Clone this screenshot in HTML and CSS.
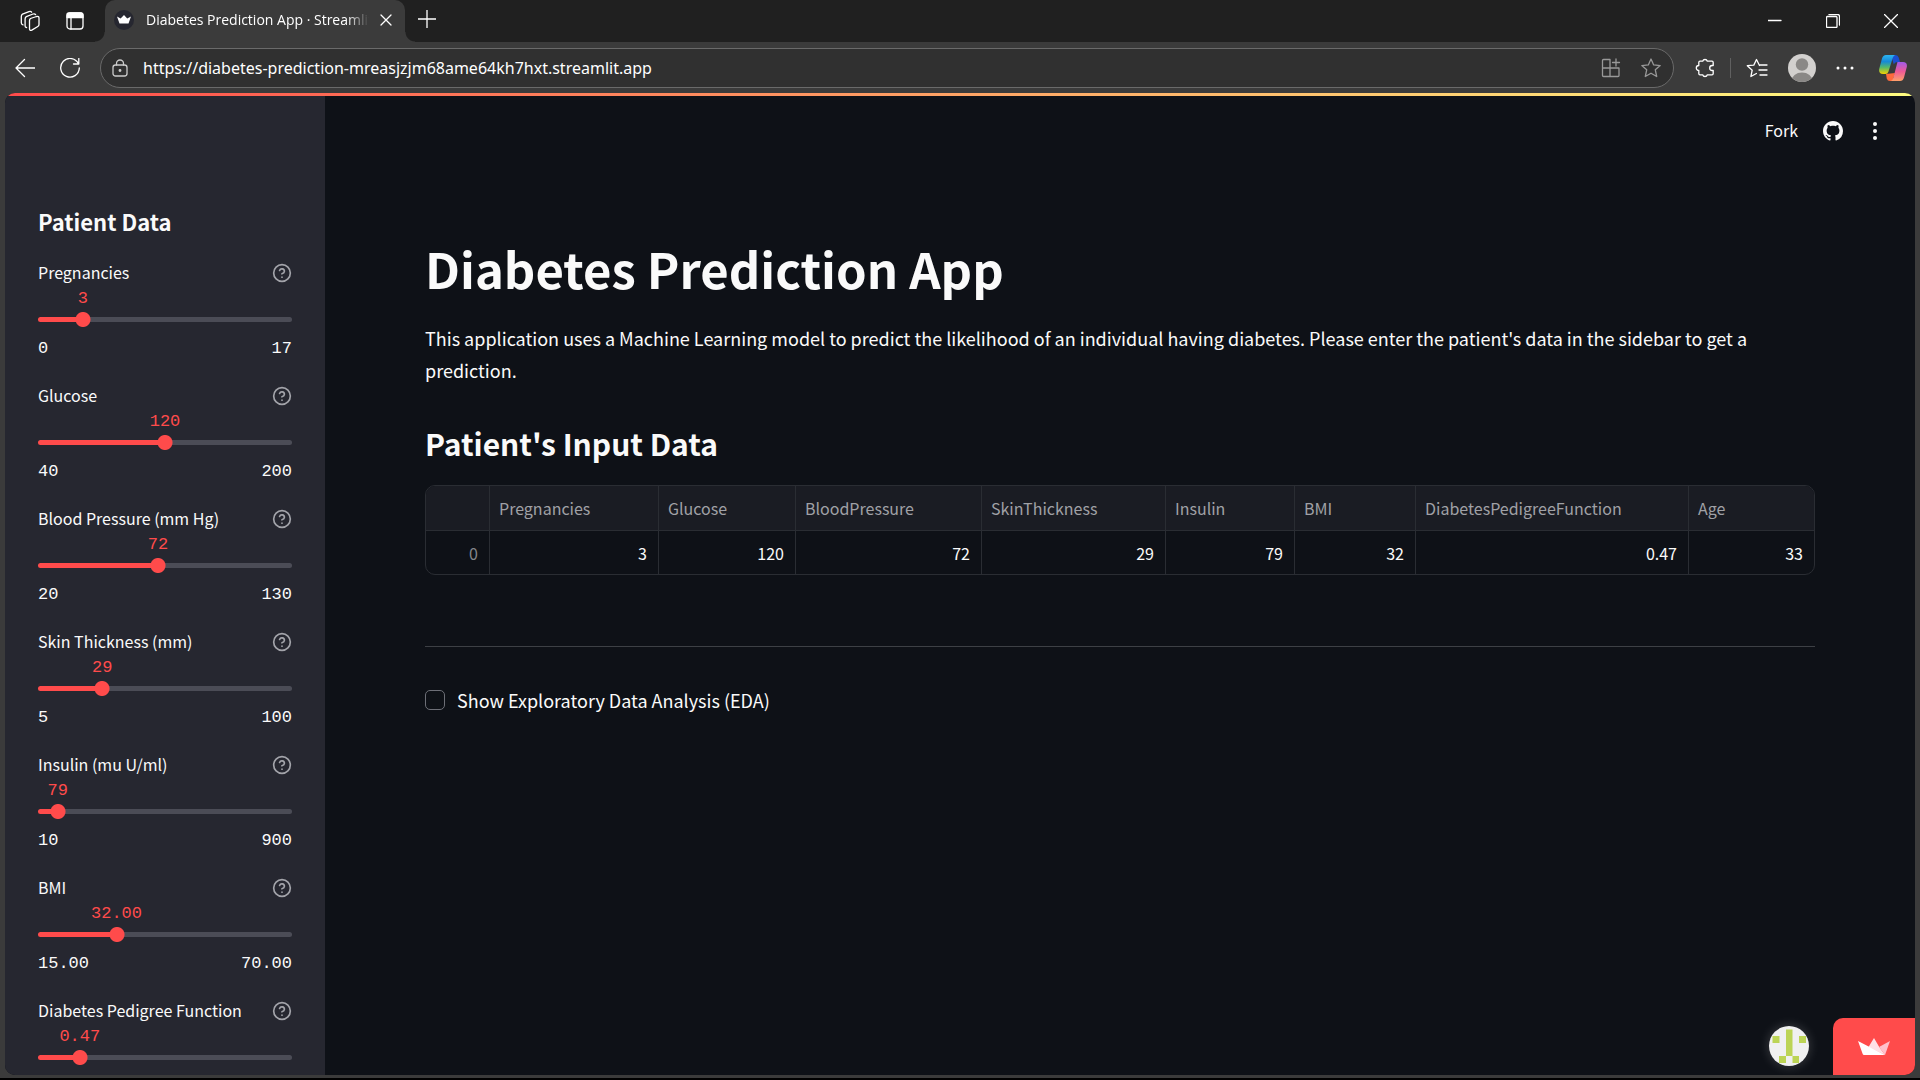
FILE: index.html
```html
<!DOCTYPE html>
<html lang="en">
<head>
<meta charset="utf-8">
<title>Diabetes Prediction App · Streamlit</title>
<link rel="stylesheet" href="styles.css">
</head>
<body>
<svg class="defs" aria-hidden="true">
  <symbol id="help" viewBox="0 0 24 24"><circle cx="12" cy="12" r="10"/><path d="M9.1 9a3 3 0 0 1 5.8 1c0 2-3 3-3 3M12 17h.01"/></symbol>
</svg>

<header class="browser">
  <div class="tabstrip">
    <div class="strip-tools">
      <button class="icon-btn" aria-label="Workspaces"><svg width="24" height="24" viewBox="0 0 24 24" class="line"><path d="M12.500 9.500l6-2q2.500-.6 2.500 1.500v6.500q0 1.400-1.200 2l-6 3.600q-2.300 1-2.300-1.300v-8q0-1.700 1-2.300z"/><path d="M8.600 18.500q-1.500-.2-1.500-1.600V10q0-1.700 1.200-2.400L15 5q1.800-.6 2.600.6M5 15.800Q3.300 15.400 3.300 13.800V7.500q0-1.700 1.200-2.400L11 2.600q1.800-.6 2.600.6"/></svg></button>
      <button class="icon-btn" aria-label="Tab actions"><svg width="20" height="20" viewBox="0 0 20 20" class="line"><rect x="2" y="2" width="16" height="16" rx="3"/><path d="M2 3.500Q2 2 4 2h12q2 0 2 2v2.500H2z" fill="#fff"/><path d="M6 7v11"/></svg></button>
    </div>
    <div class="tab">
      <svg width="20" height="20" viewBox="0 0 20 20"><circle cx="10" cy="10" r="10" fill="#262730"/><path d="M3 6.500l3.600 2L10 5l3.200 3.500L17 6.500 14.500 13.500h-9z" fill="#fff"/></svg>
      <span class="tab-title">Diabetes Prediction App · Streamlit</span>
      <button class="icon-btn" aria-label="Close tab"><svg width="12" height="12" viewBox="0 0 12 12" class="line"><path d="M1 1l10 10M11 1L1 11"/></svg></button>
    </div>
    <button class="icon-btn new-tab" aria-label="New tab"><svg width="18" height="18" viewBox="0 0 18 18" class="line"><path d="M9 0v18M0 9h18"/></svg></button>
    <div class="window-controls">
      <button class="icon-btn" aria-label="Minimize"><svg width="14" height="14" viewBox="0 0 14 14" class="line"><path d="M0 6.500h13"/></svg></button>
      <button class="icon-btn" aria-label="Restore"><svg width="14" height="14" viewBox="0 0 14 14" class="line"><rect x=".5" y="2.500" width="10.500" height="11" rx="1"/><path d="M3 .5h8.500q2 0 2 2V11"/></svg></button>
      <button class="icon-btn" aria-label="Close"><svg width="14" height="14" viewBox="0 0 14 14" class="line"><path d="M.5.5l13 13M13.500.5l-13 13"/></svg></button>
    </div>
  </div>
  <div class="toolbar">
    <button class="icon-btn" aria-label="Back"><svg width="20" height="20" viewBox="0 0 20 20" class="line"><path d="M20 10H1M9.500 1.500L1 10l8.500 8.500"/></svg></button>
    <button class="icon-btn" aria-label="Refresh"><svg width="20" height="20" viewBox="0 0 20 20" class="line"><path d="M18.500 6A9.300 9.300 0 1 0 19.300 10M18.800.5V6H13.500"/></svg></button>
    <div class="address">
      <svg width="16" height="18" viewBox="0 0 16 18" class="line soft"><rect x="1" y="6" width="14" height="11" rx="2.500"/><path d="M4.500 6V4.500a3.500 3.500 0 0 1 7 0V6"/><circle cx="8" cy="11.500" r=".8" fill="#fff"/></svg>
      <input class="url" type="text" aria-label="Address" value="https://diabetes-prediction-mreasjzjm68ame64kh7hxt.streamlit.app">
      <button class="icon-btn" aria-label="Install app"><svg width="20" height="20" viewBox="0 0 20 20" class="line dim"><path d="M1.500 2.500q0-1 1-1h6.500v17H2.500q-1 0-1-1zM1.500 10h16.500v7.500q0 1-1 1H9M15 1v7M11.500 4.500h7"/></svg></button>
      <button class="icon-btn" aria-label="Add to favorites"><svg width="20" height="20" viewBox="0 0 20 20" class="line dim"><path d="M10 1l2.700 5.900 6.500.7-4.900 4.200 1.400 6.700L10 15.200l-5.700 3.300 1.400-6.700L.8 7.600l6.500-.7z"/></svg></button>
    </div>
    <div class="toolbar-end">
      <button class="icon-btn" aria-label="Extensions"><svg width="20" height="20" viewBox="0 0 20 20" class="line"><path d="M5 3.200h2.700a2.400 2.400 0 0 1 4.600 0H17q1.200 0 1.200 1.200V7.500h-1a2.500 2.500 0 0 0 0 5h1V15.600q0 1.200-1.200 1.200H12.300a2.400 2.400 0 0 1-4.600 0H5q-1.200 0-1.200-1.200V12.500a2.500 2.500 0 0 1 0-5V4.400q0-1.200 1.200-1.200z"/></svg></button>
      <span class="divider"></span>
      <button class="icon-btn" aria-label="Favorites"><svg width="22" height="20" viewBox="0 0 22 20" class="line"><path d="M13.500 7.500L10.500 1.500 7.800 7.100 1.300 7.700l4.900 4.500-1.300 6.300 5.500-3M14 7h7M13 12h8M14 17h7"/></svg></button>
      <button class="icon-btn profile" aria-label="Profile"><svg width="28" height="28" viewBox="0 0 28 28"><clipPath id="pf"><circle cx="14" cy="14" r="14"/></clipPath><g clip-path="url(#pf)"><path d="M0 0h28v28H0z" fill="#d2d0ce"/><circle cx="14" cy="10.500" r="6.200" fill="#8a8886"/><ellipse cx="14" cy="27" rx="10.500" ry="8.500" fill="#8a8886"/></g></svg></button>
      <button class="icon-btn" aria-label="Settings"><svg width="18" height="4" viewBox="0 0 18 4" fill="#fff"><circle cx="2" cy="2" r="1.500"/><circle cx="9" cy="2" r="1.500"/><circle cx="16" cy="2" r="1.500"/></svg></button>
      <button class="icon-btn copilot" aria-label="Copilot"><svg width="28" height="26" viewBox="0 0 28 26">
        <defs>
          <linearGradient id="ca" x1="0" y1="0" x2="0" y2="1"><stop offset="0" stop-color="#2db4f0"/><stop offset=".35" stop-color="#1689d8"/><stop offset=".65" stop-color="#55b96b"/><stop offset="1" stop-color="#f5d000"/></linearGradient>
          <linearGradient id="cb" x1="0" y1="0" x2="0" y2="1"><stop offset="0" stop-color="#a05ae8"/><stop offset=".5" stop-color="#ee5a96"/><stop offset="1" stop-color="#ffa06a"/></linearGradient>
        </defs>
        <path d="M12 0h4.500q2.500 0 3.200 2.500L21 7h-3q-2.500 0-3.200 2.500z" fill="#1b4fd0"/>
        <path d="M7 19l9-1-2.500 8H11q-2.500 0-3.200-2.500z" fill="#ff6a3c"/>
        <path d="M7 0h9q-1.600.8-2.300 3L9.500 16.500Q8.700 19 6.500 19H4Q-.6 19 .2 14L3 3.500Q4 0 7 0z" fill="url(#ca)"/>
        <path d="M18.500 7H24q4.600 0 3.800 5L25 22.500Q24 26 21 26h-9q1.600-.8 2.300-3z" fill="url(#cb)"/></svg></button>
    </div>
  </div>
</header>

<div class="viewport">
  <aside class="sidebar">
    <h2>Patient Data</h2>
    <div class="widget" style="--pct: 17.65%">
      <div class="label-row"><label for="s1">Pregnancies</label><svg class="help"><use href="#help"/></svg></div>
      <output for="s1">3</output>
      <div class="slider"><input id="s1" type="range" min="0" max="17" value="3"></div>
      <div class="limits"><span>0</span><span>17</span></div>
    </div>
    <div class="widget" style="--pct: 50%">
      <div class="label-row"><label for="s2">Glucose</label><svg class="help"><use href="#help"/></svg></div>
      <output for="s2">120</output>
      <div class="slider"><input id="s2" type="range" min="40" max="200" value="120"></div>
      <div class="limits"><span>40</span><span>200</span></div>
    </div>
    <div class="widget" style="--pct: 47.27%">
      <div class="label-row"><label for="s3">Blood Pressure (mm Hg)</label><svg class="help"><use href="#help"/></svg></div>
      <output for="s3">72</output>
      <div class="slider"><input id="s3" type="range" min="20" max="130" value="72"></div>
      <div class="limits"><span>20</span><span>130</span></div>
    </div>
    <div class="widget" style="--pct: 25.26%">
      <div class="label-row"><label for="s4">Skin Thickness (mm)</label><svg class="help"><use href="#help"/></svg></div>
      <output for="s4">29</output>
      <div class="slider"><input id="s4" type="range" min="5" max="100" value="29"></div>
      <div class="limits"><span>5</span><span>100</span></div>
    </div>
    <div class="widget" style="--pct: 7.75%">
      <div class="label-row"><label for="s5">Insulin (mu U/ml)</label><svg class="help"><use href="#help"/></svg></div>
      <output for="s5">79</output>
      <div class="slider"><input id="s5" type="range" min="10" max="900" value="79"></div>
      <div class="limits"><span>10</span><span>900</span></div>
    </div>
    <div class="widget" style="--pct: 30.91%">
      <div class="label-row"><label for="s6">BMI</label><svg class="help"><use href="#help"/></svg></div>
      <output for="s6">32.00</output>
      <div class="slider"><input id="s6" type="range" min="15" max="70" step="0.1" value="32"></div>
      <div class="limits"><span>15.00</span><span>70.00</span></div>
    </div>
    <div class="widget" style="--pct: 16.46%">
      <div class="label-row"><label for="s7">Diabetes Pedigree Function</label><svg class="help"><use href="#help"/></svg></div>
      <output for="s7">0.47</output>
      <div class="slider"><input id="s7" type="range" min="0.08" max="2.45" step="0.01" value="0.47"></div>
    </div>
  </aside>

  <main class="main">
    <nav class="app-bar">
      <button class="fork">Fork</button>
      <a href="#" aria-label="GitHub"><svg width="20" height="20" viewBox="0 0 16 16" fill="#fafafa"><path d="M8 0C3.580 0 0 3.580 0 8c0 3.540 2.290 6.530 5.470 7.590.4.070.55-.17.55-.38 0-.19-.01-.82-.01-1.490-2.010.37-2.530-.49-2.690-.94-.09-.23-.48-.94-.82-1.130-.28-.15-.68-.52-.01-.53.63-.01 1.080.58 1.230.82.72 1.210 1.870.87 2.330.66.07-.52.28-.87.51-1.070-1.780-.2-3.640-.89-3.640-3.950 0-.87.31-1.590.82-2.150-.08-.2-.36-1.020.08-2.120 0 0 .67-.21 2.200.82.64-.18 1.320-.27 2-.27s1.360.09 2 .27c1.530-1.040 2.200-.82 2.200-.82.44 1.100.16 1.920.08 2.120.51.56.82 1.270.82 2.150 0 3.070-1.870 3.750-3.650 3.950.29.25.54.73.54 1.480 0 1.070-.01 1.930-.01 2.200 0 .21.15.46.55.38A8.010 8.010 0 0 0 16 8c0-4.420-3.580-8-8-8z"/></svg></a>
      <button class="icon-btn" aria-label="Main menu"><svg width="4" height="18" viewBox="0 0 4 18" fill="#fafafa"><circle cx="2" cy="2" r="2"/><circle cx="2" cy="9" r="2"/><circle cx="2" cy="16" r="2"/></svg></button>
    </nav>
    <section class="content">
      <h1>Diabetes Prediction App</h1>
      <p>This application uses a Machine Learning model to predict the likelihood of an individual having diabetes. Please enter the patient's data in the sidebar to get a prediction.</p>
      <h2>Patient's Input Data</h2>
      <div class="frame">
        <table>
          <colgroup><col class="c-index"><col class="c-preg"><col class="c-gluc"><col class="c-bp"><col class="c-skin"><col class="c-ins"><col class="c-bmi"><col class="c-dpf"><col class="c-age"></colgroup>
          <thead><tr><td></td><th>Pregnancies</th><th>Glucose</th><th>BloodPressure</th><th>SkinThickness</th><th>Insulin</th><th>BMI</th><th>DiabetesPedigreeFunction</th><th>Age</th></tr></thead>
          <tbody><tr><th>0</th><td>3</td><td>120</td><td>72</td><td>29</td><td>79</td><td>32</td><td>0.47</td><td>33</td></tr></tbody>
        </table>
      </div>
      <hr>
      <label class="check"><input type="checkbox"><span>Show Exploratory Data Analysis (EDA)</span></label>
    </section>
    <div class="badges">
      <a class="avatar" href="#" aria-label="Creator profile"><svg width="40" height="40" viewBox="0 0 40 40"><circle cx="20" cy="20" r="20" fill="#f0f0f0"/><path d="M17 3.500h6.500v26.500H17zM3.500 10h7v7h-7zM30 10h7v7h-7zM10 30h7v7h-7zM23.500 30h6.500v7h-6.500z" fill="#bcd455"/></svg></a>
      <a class="hosted" href="#" aria-label="Hosted with Streamlit"><svg width="32" height="18" viewBox="0 0 32 18"><path d="M16 0l5.500 9.500L27 17 10.500 9z" fill="#ffe1e6"/><path d="M32 3l-5 14-6-8z" fill="#ffc0cb"/><path d="M0 3l27 14H6q-1 0-1.300-1z" fill="#fff"/></svg></a>
    </div>
  </main>
</div>
</body>
</html>
```
FILE: styles.css
```css
* { box-sizing: border-box; }

:root {
  --red: #ff4b4b;
  --text: #fafafa;
  --chrome: #3b3b3b;
  --line: #2a2d33;
  --sans: "Noto Sans CJK SC", "Noto Sans", sans-serif;
  --ui: "Open Sans", "Noto Sans", sans-serif;
  --mono: "Liberation Mono", monospace;
}

body {
  margin: 0;
  height: 100vh;
  display: flex;
  flex-direction: column;
  overflow: hidden;
  background: var(--chrome);
  border-bottom: 2px solid #000;
  color: var(--text);
  font-family: var(--sans);
}

h1, h2, p { margin: 0; }
button { font: inherit; color: inherit; }
svg { display: block; flex: none; }
.defs { position: absolute; width: 0; height: 0; }

.icon-btn {
  display: grid;
  place-items: center;
  padding: 0;
  border: 0;
  background: none;
}
.line { fill: none; stroke: #fff; stroke-width: 1.3; stroke-linecap: round; stroke-linejoin: round; }
.soft { stroke: #ccc; }
.dim { stroke: #999; }

/* Browser window */
.browser { font-family: var(--ui); color: #fff; }
.tabstrip { display: flex; height: 42px; background: #202020; }
.strip-tools { display: flex; align-items: center; gap: 23px; width: 105px; padding-left: 18px; }
.tab {
  position: relative;
  display: flex;
  align-items: center;
  width: 300px;
  padding: 0 13px 2px 9px;
  border-radius: 10px 10px 0 0;
  background: var(--chrome);
}
.tab::before, .tab::after {
  content: "";
  position: absolute;
  bottom: 0;
  width: 10px;
  height: 10px;
}
.tab::before { right: 100%; background: radial-gradient(circle at 0 0, transparent 9px, var(--chrome) 10px); }
.tab::after { left: 100%; background: radial-gradient(circle at 100% 0, transparent 9px, var(--chrome) 10px); }
.tab-title {
  flex: 1;
  overflow: hidden;
  margin: 0 11px 0 12px;
  font-size: 14px;
  line-height: 20px;
  white-space: nowrap;
  mask-image: linear-gradient(to right, #000 90%, transparent);
}
.new-tab { width: 44px; padding-bottom: 4px; }
.window-controls { display: flex; margin-left: auto; }
.window-controls .icon-btn { width: 58px; }

.toolbar { display: flex; align-items: center; height: 51px; padding: 0 13px 0 15px; gap: 25px; }
.address {
  flex: 1;
  display: flex;
  align-items: center;
  gap: 20px;
  height: 40px;
  margin-left: -5px;
  padding: 0 12px 0 11px;
  border: 1px solid #6a6a6a;
  border-radius: 20px;
  background: #303030;
}
.url {
  flex: 1;
  min-width: 0;
  margin-left: -5px;
  padding: 0;
  border: 0;
  outline: 0;
  background: none;
  color: #fff;
  font: 16px/24px "Noto Sans", sans-serif;
}
.toolbar-end { display: flex; align-items: center; gap: 15px; margin-left: -4px; }
.profile { margin: 0 5px; }
.copilot { margin-left: 10px; }
.divider { width: 1px; height: 20px; background: #606060; }

/* Page */
.viewport {
  position: relative;
  flex: 1;
  min-height: 0;
  display: flex;
  margin: 0 5px 3px;
  border-radius: 10px;
  overflow: hidden;
  background: #0e1117;
}
.viewport::before {
  content: "";
  position: absolute;
  inset: 0 0 auto;
  height: 3px;
  background: linear-gradient(to right, var(--red), #fffd80);
}

.sidebar {
  flex: none;
  width: 320px;
  padding: 113px 33px 0;
  overflow: hidden;
  background: #262730;
}
.sidebar h2 { margin-bottom: 24px; font-size: 22px; line-height: 30px; font-weight: 700; }
.widget { margin-bottom: 22px; font-size: 16px; line-height: 25px; }
.label-row { display: flex; align-items: center; justify-content: space-between; margin-bottom: 2px; }
.help { width: 20px; height: 20px; fill: none; stroke: #a3a4aa; stroke-width: 2; stroke-linecap: round; stroke-linejoin: round; }
output {
  display: flex;
  justify-content: center;
  width: 0;
  margin-left: var(--pct);
  color: var(--red);
  font-family: var(--mono);
  font-size: 17px;
  line-height: 24px;
}
.slider {
  height: 17px;
  display: grid;
  align-items: center;
}
.slider::before, .slider input { grid-area: 1 / 1; }
.slider::before {
  content: "";
  height: 5px;
  border-radius: 3px;
  background: linear-gradient(to right, var(--red) var(--pct), #4b4c56 var(--pct));
}
.slider input {
  appearance: none;
  width: calc(100% + 16px);
  height: 15px;
  margin: 0 -8px;
  background: none;
}
.slider input::-webkit-slider-thumb {
  appearance: none;
  width: 16px;
  height: 15px;
  background: radial-gradient(circle, var(--red) 7px, transparent 8px);
}
.limits {
  display: flex;
  justify-content: space-between;
  margin-top: 8px;
  font-family: var(--mono);
  font-size: 17px;
}

.main { position: relative; flex: 1; min-width: 0; display: flex; flex-direction: column; }
.app-bar {
  display: flex;
  align-items: center;
  justify-content: flex-end;
  gap: 25px;
  height: 75px;
  padding-right: 38px;
}
.app-bar .icon-btn { margin-left: 5px; }
.fork { padding: 0 0 2px; border: 0; background: none; font-size: 16px; line-height: 24px; }

.content { padding: 67px 100px 0; }
.content h1 { font-size: 49px; line-height: 66px; font-weight: 700; }
.content p { margin-top: 21px; font-size: 18px; line-height: 32px; }
.content h2 { margin-top: 36px; font-size: 30px; line-height: 42px; font-weight: 700; }
.frame { margin-top: 21px; border: 1px solid var(--line); border-radius: 10px; overflow: hidden; }
table { width: 100%; table-layout: fixed; border-collapse: separate; border-spacing: 0; font-size: 16px; line-height: 22px; }
th, td { padding: 0 9px; font-weight: 400; white-space: nowrap; }
th + th, th + td, td + td, td + th { border-left: 1px solid var(--line); }
thead { background: #1a1c23; }
thead tr > * { height: 45px; border-bottom: 1px solid var(--line); text-align: left; color: #a0a1a6; }
tbody tr > * { height: 43px; padding-right: 11px; text-align: right; }
tbody th { color: #84868b; }
.c-index { width: 63px; }
.c-preg { width: 169px; }
.c-gluc { width: 137px; }
.c-bp { width: 186px; }
.c-skin { width: 184px; }
.c-ins { width: 129px; }
.c-bmi { width: 121px; }
.c-dpf { width: 273px; }
.c-age { width: 126px; }

hr { height: 1px; margin: 71px 0 37px; border: 0; background: #3d4045; }
.check { display: flex; align-items: center; gap: 12px; width: fit-content; font-size: 18px; line-height: 32px; }
.check input {
  appearance: none;
  width: 20px;
  height: 20px;
  margin: 0;
  border: 1px solid #6d6f77;
  border-radius: 5px;
}

.badges { position: absolute; right: 0; bottom: 0; display: flex; align-items: center; gap: 24px; }
.avatar { margin-bottom: 1px; border-radius: 50%; box-shadow: 0 0 12px rgb(255 255 255 / 20%); }
.hosted { display: grid; place-items: center; width: 82px; height: 57px; border-radius: 10px 0 0 0; background: var(--red); }
```
